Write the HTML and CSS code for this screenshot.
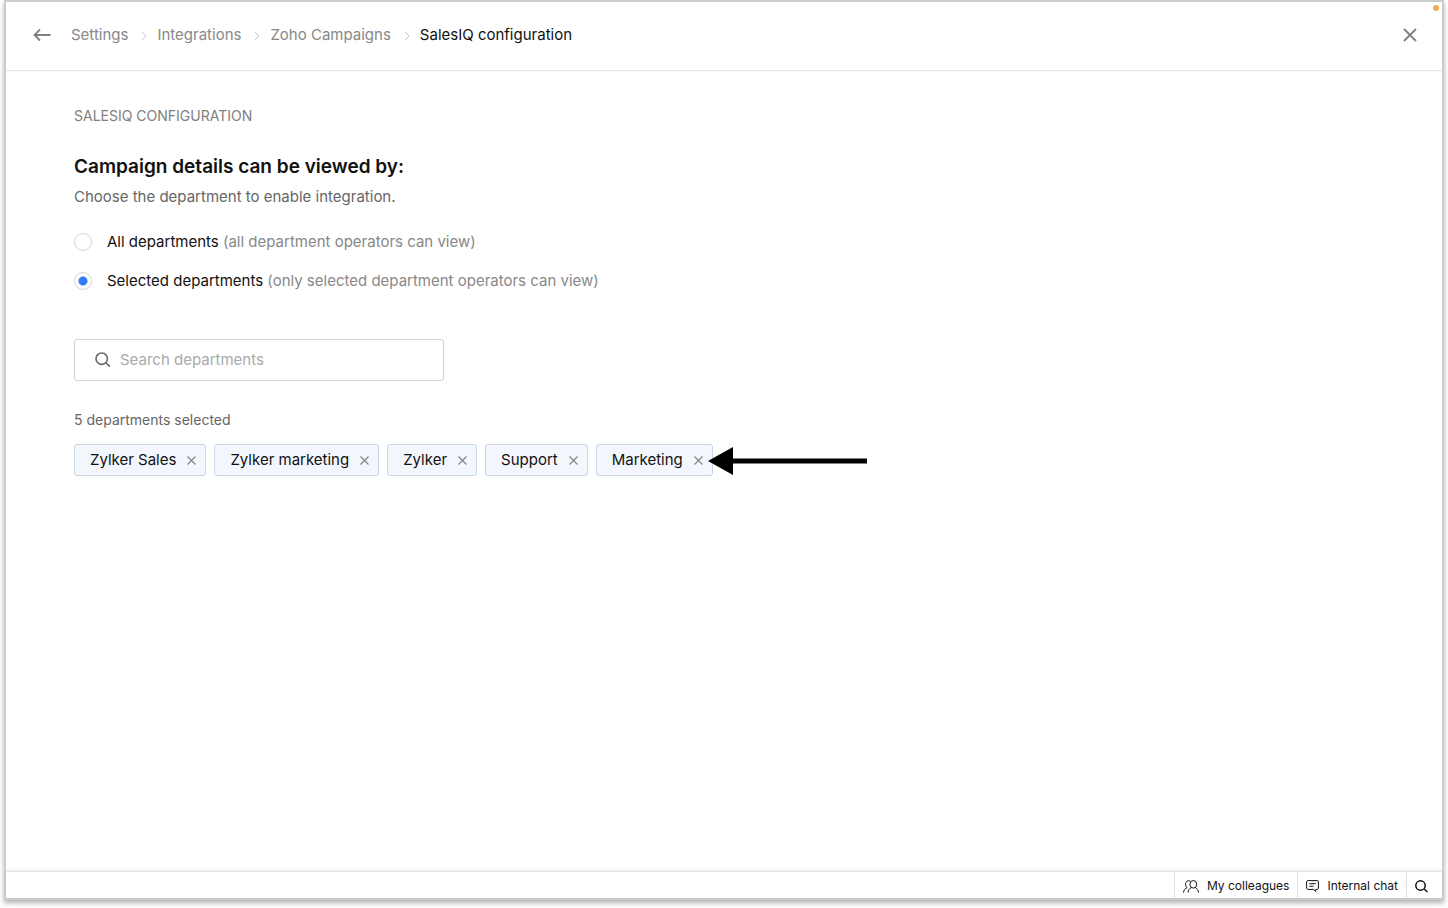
FILE: index.html
```html
<!DOCTYPE html>
<html lang="en">
<head>
    <meta charset="UTF-8">
    <meta name="viewport" content="width=device-width, initial-scale=1.0">
    <title>SalesIQ configuration</title>
    <link rel="stylesheet" href="styles.css">
</head>
<body>
    <div class="window">
        <span class="status-dot"></span>
        <header class="topbar">
            <button type="button" class="icon-button back" aria-label="Back">
                <svg width="18" height="14" viewBox="0 0 18 14"><path d="M7 1.5L1.500 7L7 12.5M1.500 7H17.500"/></svg>
            </button>
            <nav class="breadcrumb" aria-label="Breadcrumb">
                <a href="#">Settings</a>
                <svg class="chevron" width="6" height="10" viewBox="0 0 6 10"><path d="M1 1L5 5L1 9"/></svg>
                <a href="#">Integrations</a>
                <svg class="chevron" width="6" height="10" viewBox="0 0 6 10"><path d="M1 1L5 5L1 9"/></svg>
                <a href="#">Zoho Campaigns</a>
                <svg class="chevron" width="6" height="10" viewBox="0 0 6 10"><path d="M1 1L5 5L1 9"/></svg>
                <span class="current">SalesIQ configuration</span>
            </nav>
            <button type="button" class="icon-button close" aria-label="Close">
                <svg width="14" height="14" viewBox="0 0 14 14"><path d="M1 1L13 13M13 1L1 13"/></svg>
            </button>
        </header>

        <main class="content">
            <h1 class="section-label">SALESIQ CONFIGURATION</h1>
            <h2 class="title">Campaign details can be viewed by:</h2>
            <p class="subtitle">Choose the department to enable integration.</p>

            <div class="options">
                <label class="option">
                    <input type="radio" name="departments" value="all">
                    <span>All departments <span class="hint">(all department operators can view)</span></span>
                </label>
                <label class="option">
                    <input type="radio" name="departments" value="selected" checked>
                    <span>Selected departments <span class="hint">(only selected department operators can view)</span></span>
                </label>
            </div>

            <label class="search">
                <svg width="16" height="16" viewBox="0 0 16 16"><circle cx="6.7" cy="6.7" r="5.7"/><path d="M11 11L15 14.7"/></svg>
                <input type="text" placeholder="Search departments" aria-label="Search departments">
            </label>

            <p class="count">5 departments selected</p>
            <ul class="tags">
                <li class="tag">Zylker Sales
                    <button type="button" aria-label="Remove Zylker Sales"><svg width="9" height="9" viewBox="0 0 9 9"><path d="M.5 .5L8.500 8.500M8.500 .5L.5 8.500"/></svg></button>
                </li>
                <li class="tag">Zylker marketing
                    <button type="button" aria-label="Remove Zylker marketing"><svg width="9" height="9" viewBox="0 0 9 9"><path d="M.5 .5L8.500 8.500M8.500 .5L.5 8.500"/></svg></button>
                </li>
                <li class="tag">Zylker
                    <button type="button" aria-label="Remove Zylker"><svg width="9" height="9" viewBox="0 0 9 9"><path d="M.5 .5L8.500 8.500M8.500 .5L.5 8.500"/></svg></button>
                </li>
                <li class="tag">Support
                    <button type="button" aria-label="Remove Support"><svg width="9" height="9" viewBox="0 0 9 9"><path d="M.5 .5L8.500 8.500M8.500 .5L.5 8.500"/></svg></button>
                </li>
                <li class="tag">Marketing
                    <button type="button" aria-label="Remove Marketing"><svg width="9" height="9" viewBox="0 0 9 9"><path d="M.5 .5L8.500 8.500M8.500 .5L.5 8.500"/></svg></button>
                    <svg class="pointer" width="159" height="28" viewBox="0 0 159 28"><path d="M0 14L25 0V11.500H159V16.500H25V28Z"/></svg>
                </li>
            </ul>
        </main>

        <footer class="chatbar">
            <button type="button" class="chat-item">
                <svg width="16" height="13" viewBox="0 0 16 13"><ellipse cx="10.300" cy="4.300" rx="3.400" ry="3.800"/><path d="M8.500 7.600C6.500 8.400 5.300 10 5 12.500M12.100 7.600C14.100 8.400 15.200 10 15.500 12.500M7.200 1.200C4.800 -.2 2.400 1.600 2.500 4.300C2.500 5.800 3.200 7 4.200 7.700C2 8.400 .8 10 .5 12.500"/></svg>
                My colleagues
            </button>
            <button type="button" class="chat-item">
                <svg width="13" height="12" viewBox="0 0 13 12"><path d="M2 .6H11C12 .6 12.400 1 12.400 2V8C12.400 9 12 9.400 11 9.400H9.700V11.400L7.200 9.400H2C1 9.400 .6 9 .6 8V2C.6 1 1 .6 2 .6ZM3.300 3.700H9.700M3.300 6.200H7.500"/></svg>
                Internal chat
            </button>
            <button type="button" class="chat-item find" aria-label="Search">
                <svg width="13" height="13" viewBox="0 0 13 13"><circle cx="5.500" cy="5.500" r="4.700"/><path d="M9 9L12.500 12"/></svg>
            </button>
        </footer>
    </div>
</body>
</html>
```

FILE: styles.css
```css
* {
    box-sizing: border-box;
}
body {
    margin: 0;
    padding: 0 4px 8px;
    height: 100vh;
    background-color: #fff;
    color: #111;
    font-family: Inter, "Open Sans", sans-serif;
    font-size: 15px;
    line-height: 20px;
}
svg {
    display: block;
    flex: none;
    fill: none;
    stroke: currentColor;
}
button {
    border: 0;
    padding: 0;
    background: none;
    font: inherit;
    color: inherit;
    cursor: pointer;
}
h1, h2, p, ul {
    margin: 0;
    padding: 0;
    font-weight: 400;
}
.window {
    position: relative;
    display: flex;
    flex-direction: column;
    min-height: 100%;
    border: 2px solid #ccc;
    box-shadow: 0 3px 5px rgba(0, 0, 0, 0.3);
}
.status-dot {
    position: absolute;
    top: 3px;
    right: 3px;
    width: 6px;
    height: 6px;
    border-radius: 50%;
    background-color: #f5a957;
}

/* Header */
.topbar {
    display: flex;
    align-items: center;
    height: 69px;
    padding: 0 25px 2px 27px;
    border-bottom: 1px solid #e8e8e8;
    box-shadow: 0 1px 2px rgba(0, 0, 0, 0.04);
}
.icon-button {
    color: #808080;
    stroke-width: 1.8;
}
.close {
    margin-left: auto;
}
.breadcrumb {
    display: flex;
    align-items: center;
    gap: 11px;
    margin-left: 20px;
}
.breadcrumb a {
    color: #888;
    text-decoration: none;
}
.chevron {
    margin: 2px -1px 0 2px;
    color: #c8c8c8;
}

/* Settings form */
.content {
    flex: 1;
    padding: 35px 68px;
}
.section-label {
    color: #808080;
    font-size: 14px;
}
.title {
    margin-top: 27px;
    font-size: 19px;
    font-weight: 600;
    line-height: 28px;
}
.subtitle {
    margin-top: 6px;
    color: #666;
}
.options {
    display: flex;
    flex-direction: column;
    align-items: flex-start;
    gap: 19px;
    margin-top: 25px;
}
.option {
    display: flex;
    align-items: center;
    gap: 15px;
}
.option input {
    appearance: none;
    width: 18px;
    height: 18px;
    margin: 0;
    border: 1px solid #d4d4d4;
    border-radius: 50%;
}
.option input:checked {
    background: radial-gradient(circle, #2f7bf6 4px, transparent 5px);
}
.hint {
    color: #888;
}
.search {
    display: flex;
    align-items: center;
    gap: 9px;
    width: 370px;
    height: 42px;
    margin-top: 48px;
    padding: 0 20px;
    border: 1px solid #d0d0d0;
    border-radius: 3px;
    color: #666;
    stroke-width: 1.6;
}
.search input {
    flex: 1;
    min-width: 0;
    padding: 0;
    border: 0;
    outline: 0;
    background: none;
    font: inherit;
}
.search input::placeholder {
    color: #aaa;
}
.count {
    margin-top: 29px;
    color: #666;
    font-size: 14px;
}
.tags {
    display: flex;
    flex-wrap: wrap;
    gap: 8px;
    margin-top: 14px;
    list-style: none;
}
.tag {
    position: relative;
    display: flex;
    align-items: center;
    gap: 11px;
    height: 32px;
    padding: 0 9px 0 15px;
    border: 1px solid #c9d7e6;
    border-radius: 3px;
    background-color: #f3f7fd;
}
.tag button {
    color: #858585;
    stroke-width: 1.2;
}
.pointer {
    position: absolute;
    top: 2px;
    left: 100%;
    margin-left: -4px;
    fill: #000;
    stroke: none;
}

/* Bottom chat bar */
.chatbar {
    display: flex;
    justify-content: flex-end;
    height: 27px;
    border-top: 1px solid #e2e2e2;
    box-shadow: 0 -1px 4px rgba(0, 0, 0, 0.08);
    font-size: 12px;
}
.chat-item {
    display: flex;
    align-items: center;
    gap: 8px;
    padding: 2px 8px 0;
    border-left: 1px solid #ddd;
}
.find {
    padding: 2px 14px 0 8px;
    stroke-width: 1.5;
}
```
